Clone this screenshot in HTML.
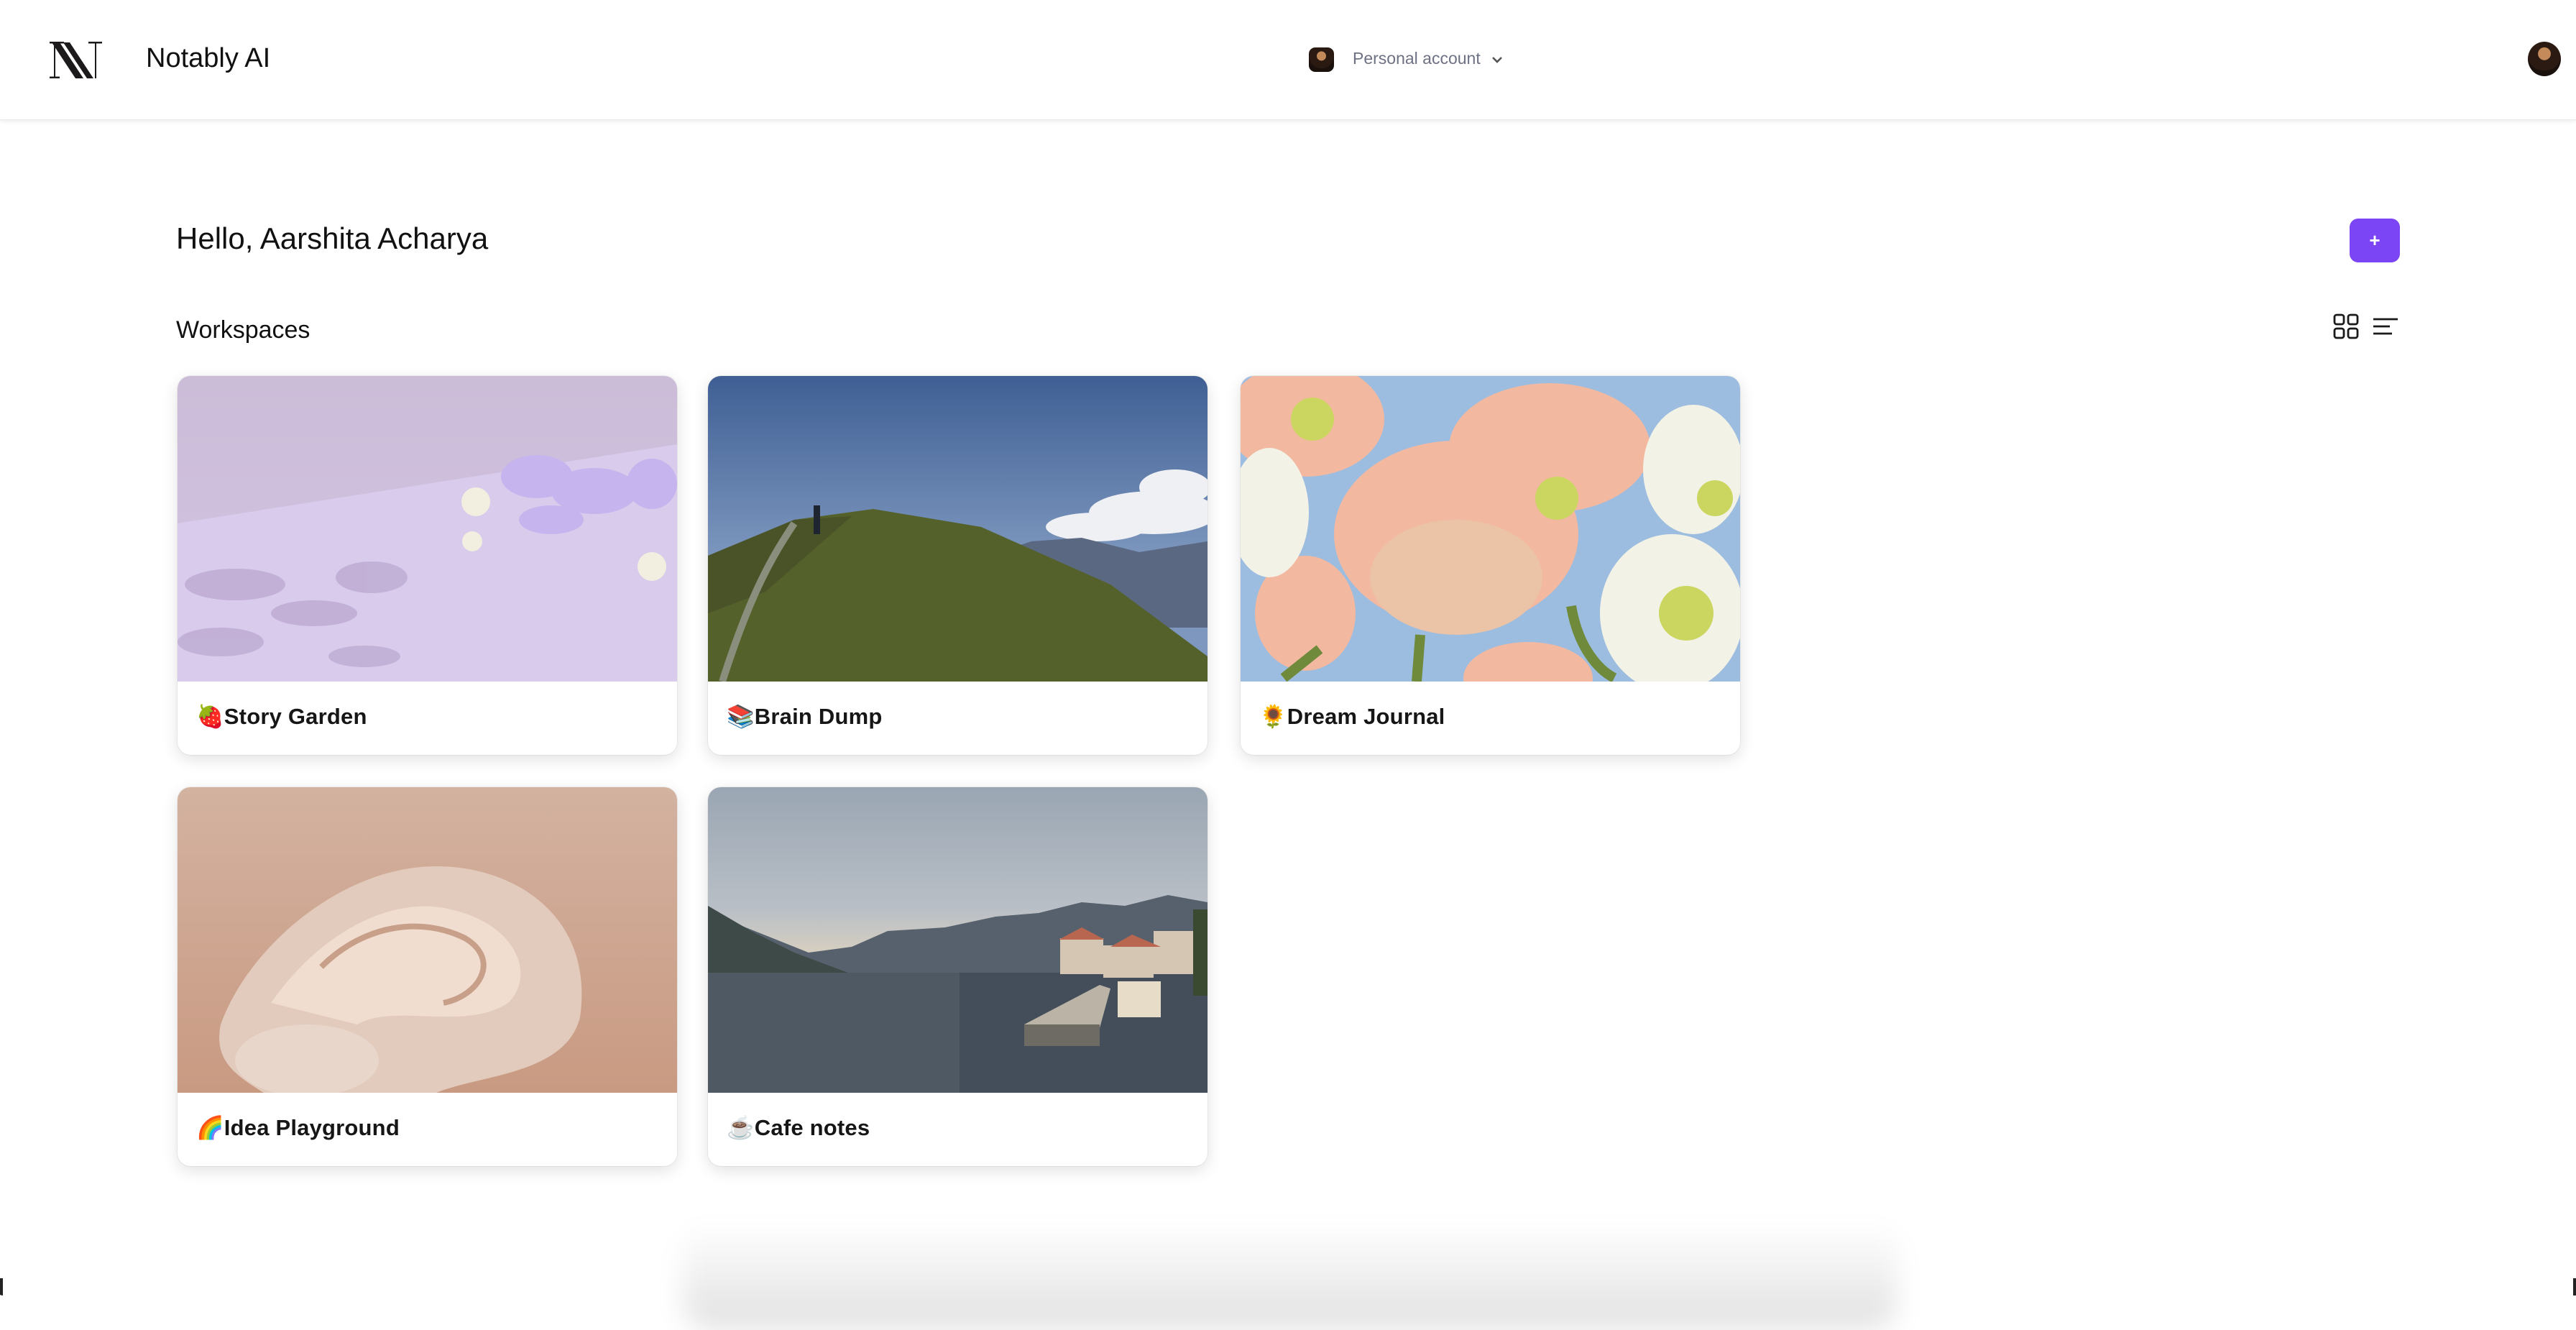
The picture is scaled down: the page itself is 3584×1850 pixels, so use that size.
<!DOCTYPE html>
<html><head><meta charset="utf-8"><style>
*{margin:0;padding:0;box-sizing:border-box}
html,body{width:3584px;height:1798px;overflow:hidden;background:#fff;font-family:"Liberation Sans","Noto Sans CJK JP",sans-serif;color:#111}
.hdr{position:absolute;left:0;top:0;width:3584px;height:167px;background:#fff;box-shadow:0 2px 6px rgba(0,0,0,.08);border-bottom:1px solid #e8e8e8}
.abs{position:absolute}
.card{position:absolute;width:695px;height:527px;border-radius:18px;background:#fff;box-shadow:0 6px 22px rgba(0,0,0,.12),0 0 0 1px rgba(0,0,0,.05);overflow:hidden}
.card svg{position:absolute;left:0;top:0;width:695px;height:425px;display:block}
.card .t{position:absolute;left:26px;top:455px;font-size:31px;font-weight:700;letter-spacing:.2px;white-space:nowrap;color:#161616}
.av{background:radial-gradient(circle at 50% 35%,#c48a5a 0 22%,#2a1a12 24% 60%,#1a110c 62%),#e8c28a}
</style></head><body>
<div class="hdr"></div>
<svg class="abs" style="left:66px;top:56px" width="80" height="55" viewBox="0 0 80 55">
<g fill="#1c1a1a">
<polygon points="6,3 17,3 50,53 39,53"/>
<polygon points="22,3 31,3 64,53 55,53"/>
<rect x="9" y="8" width="2" height="44"/>
<rect x="3" y="50.5" width="14" height="2.5"/>
<rect x="3" y="2" width="20" height="2.5"/>
<rect x="66" y="3" width="2" height="50"/>
<rect x="57" y="2" width="19" height="2.5"/>
</g></svg>
<div class="abs" style="left:203px;top:60px;font-size:38px;color:#111">Notably AI</div>
<div class="abs av" style="left:1821px;top:66px;width:35px;height:34px;border-radius:9px"></div>
<div class="abs" style="left:1882px;top:68px;font-size:23px;color:#6d7183">Personal account</div>
<svg class="abs" style="left:2074px;top:76px" width="18" height="14" viewBox="0 0 18 14"><path d="M3 4l6 6 6-6" fill="none" stroke="#555" stroke-width="2.6"/></svg>
<div class="abs av" style="left:3517px;top:58px;width:46px;height:48px;border-radius:50%"></div>

<div class="abs" style="left:245px;top:308px;font-size:42px;color:#111">Hello, Aarshita Acharya</div>
<div class="abs" style="left:3269px;top:304px;width:70px;height:61px;border-radius:12px;background:#7b44f5;color:#fff;font-size:26px;font-weight:700;text-align:center;line-height:61px">+</div>
<div class="abs" style="left:245px;top:440px;font-size:34px;color:#111">Workspaces</div>
<svg class="abs" style="left:3246px;top:436px" width="36" height="36" viewBox="0 0 36 36"><g fill="none" stroke="#1a1a1a" stroke-width="2.8"><rect x="2" y="2" width="13" height="13" rx="3"/><rect x="21" y="2" width="13" height="13" rx="3"/><rect x="2" y="21" width="13" height="13" rx="3"/><rect x="21" y="21" width="13" height="13" rx="3"/></g></svg>
<svg class="abs" style="left:3300px;top:436px" width="38" height="36" viewBox="0 0 38 36"><g stroke="#1a1a1a" stroke-width="2.8"><line x1="2" y1="8" x2="36" y2="8"/><line x1="2" y1="18" x2="25" y2="18"/><line x1="2" y1="28" x2="28" y2="28"/></g></svg>

<div class="card" style="left:247px;top:523px">
<svg viewBox="0 0 695 425" preserveAspectRatio="none"><defs><linearGradient id="a1" x1="0" y1="0" x2="0" y2="1"><stop offset="0" stop-color="#cbbcd8"/><stop offset="1" stop-color="#d3c4e4"/></linearGradient></defs>
<rect width="695" height="425" fill="url(#a1)"/>
<polygon points="0,205 695,95 695,425 0,425" fill="#d8cbec"/>
<g fill="#b9a6cf" opacity=".7"><ellipse cx="80" cy="290" rx="70" ry="22"/><ellipse cx="190" cy="330" rx="60" ry="18"/><ellipse cx="270" cy="280" rx="50" ry="22"/><ellipse cx="60" cy="370" rx="60" ry="20"/><ellipse cx="260" cy="390" rx="50" ry="15"/></g>
<g fill="#c6b4ee"><ellipse cx="500" cy="140" rx="50" ry="30"/><ellipse cx="580" cy="160" rx="60" ry="32"/><ellipse cx="520" cy="200" rx="45" ry="20"/><ellipse cx="660" cy="150" rx="35" ry="35"/></g>
<g fill="#f2efe0"><circle cx="415" cy="175" r="20"/><circle cx="410" cy="230" r="14"/><circle cx="660" cy="265" r="20"/></g>
</svg>
<div class="t">🍓Story Garden</div></div>

<div class="card" style="left:985px;top:523px">
<svg viewBox="0 0 695 425" preserveAspectRatio="none"><defs><linearGradient id="a2" x1="0" y1="0" x2="0" y2="1"><stop offset="0" stop-color="#3f5f94"/><stop offset=".6" stop-color="#7d97be"/></linearGradient></defs>
<rect width="695" height="425" fill="url(#a2)"/>
<g fill="#eef0f4"><ellipse cx="620" cy="190" rx="90" ry="30"/><ellipse cx="540" cy="210" rx="70" ry="20"/><ellipse cx="650" cy="155" rx="50" ry="25"/></g>
<polygon points="360,260 450,230 520,225 600,245 695,230 695,350 420,350" fill="#5a6882"/>
<polygon points="0,250 120,200 230,185 380,210 560,290 695,390 695,425 0,425" fill="#54612b"/>
<polygon points="0,250 120,200 200,195 80,300 0,330" fill="#4a5327"/>
<path d="M120,205 C90,250 60,300 20,425" stroke="#8a8e7c" stroke-width="10" fill="none"/>
<rect x="147" y="180" width="9" height="40" fill="#1f2530"/>
</svg>
<div class="t">📚Brain Dump</div></div>

<div class="card" style="left:1726px;top:523px">
<svg viewBox="0 0 695 425" preserveAspectRatio="none">
<rect width="695" height="425" fill="#9dbde0"/>
<g fill="#f2b8a0"><ellipse cx="90" cy="60" rx="110" ry="80"/><ellipse cx="300" cy="220" rx="170" ry="130"/><ellipse cx="430" cy="100" rx="140" ry="90"/><ellipse cx="90" cy="330" rx="70" ry="80"/><ellipse cx="400" cy="420" rx="90" ry="50"/></g>
<g fill="#ebc3a6"><ellipse cx="300" cy="280" rx="120" ry="80"/></g>
<g fill="#f3f2e6"><ellipse cx="630" cy="130" rx="70" ry="90"/><ellipse cx="600" cy="330" rx="100" ry="110"/><ellipse cx="40" cy="190" rx="55" ry="90"/></g>
<g fill="#cbd660"><circle cx="100" cy="60" r="30"/><circle cx="440" cy="170" r="30"/><circle cx="620" cy="330" r="38"/><circle cx="660" cy="170" r="25"/></g>
<g stroke="#6f8a3a" stroke-width="14" fill="none"><path d="M250,360 L245,425"/><path d="M460,320 C470,380 500,410 520,420"/><path d="M60,420 L110,380"/></g>
</svg>
<div class="t">🌻Dream Journal</div></div>

<div class="card" style="left:247px;top:1095px">
<svg viewBox="0 0 695 425" preserveAspectRatio="none"><defs><linearGradient id="a4" x1="0" y1="0" x2="0" y2="1"><stop offset="0" stop-color="#d3b2a0"/><stop offset="1" stop-color="#c99a82"/></linearGradient></defs>
<rect width="695" height="425" fill="url(#a4)"/>
<path d="M60,330 C100,220 230,110 360,110 C470,110 580,180 560,320 C540,400 420,400 360,425 L120,425 C80,400 50,380 60,330Z" fill="#e2cbbd"/>
<path d="M130,300 C200,200 300,150 380,170 C470,190 500,260 460,300 C400,340 300,300 250,330Z" fill="#f0ddd0"/>
<path d="M200,250 C260,190 340,180 400,210 C450,240 420,290 370,300" fill="none" stroke="#c8a08a" stroke-width="8"/>
<ellipse cx="180" cy="380" rx="100" ry="50" fill="#e8d6ca"/>
</svg>
<div class="t">🌈Idea Playground</div></div>

<div class="card" style="left:985px;top:1095px">
<svg viewBox="0 0 695 425" preserveAspectRatio="none"><defs><linearGradient id="a5" x1="0" y1="0" x2="0" y2="1"><stop offset="0" stop-color="#9aa6b3"/><stop offset=".4" stop-color="#b9bfc6"/><stop offset=".55" stop-color="#d8cfc0"/></linearGradient></defs>
<rect width="695" height="425" fill="url(#a5)"/>
<polygon points="0,165 40,190 90,210 140,230 200,222 250,200 330,195 400,180 460,175 520,160 580,165 640,150 695,160 695,260 0,260" fill="#56616d"/>
<polygon points="0,165 60,200 120,230 200,260 0,260" fill="#3e4a48"/>
<rect y="258" width="695" height="167" fill="#434e5a"/>
<rect y="258" width="350" height="167" fill="#5a636c" opacity=".5"/>
<g fill="#d5c6b4"><rect x="490" y="210" width="60" height="50"/><rect x="550" y="220" width="70" height="45"/><rect x="620" y="200" width="55" height="60"/></g>
<g fill="#b86650"><polygon points="488,212 520,195 552,212"/><polygon points="560,222 590,205 630,222"/></g>
<polygon points="440,330 545,275 560,280 545,335" fill="#bbb3a6"/>
<rect x="440" y="330" width="105" height="30" fill="#6e6a64"/>
<rect x="570" y="270" width="60" height="50" fill="#e6dcc8"/>
<rect x="675" y="170" width="20" height="120" fill="#3a4a30"/>
</svg>
<div class="t">☕Cafe notes</div></div>

<div class="abs" style="left:950px;top:1700px;width:1690px;height:150px;border-radius:40px;background:linear-gradient(to bottom,rgba(0,0,0,0),rgba(0,0,0,.12));filter:blur(18px)"></div>
<div class="abs" style="left:-4px;top:1778px;width:8px;height:24px;border-radius:0 0 0 8px;background:#222"></div>
<div class="abs" style="left:3580px;top:1778px;width:8px;height:24px;background:#222"></div>
</body></html>
